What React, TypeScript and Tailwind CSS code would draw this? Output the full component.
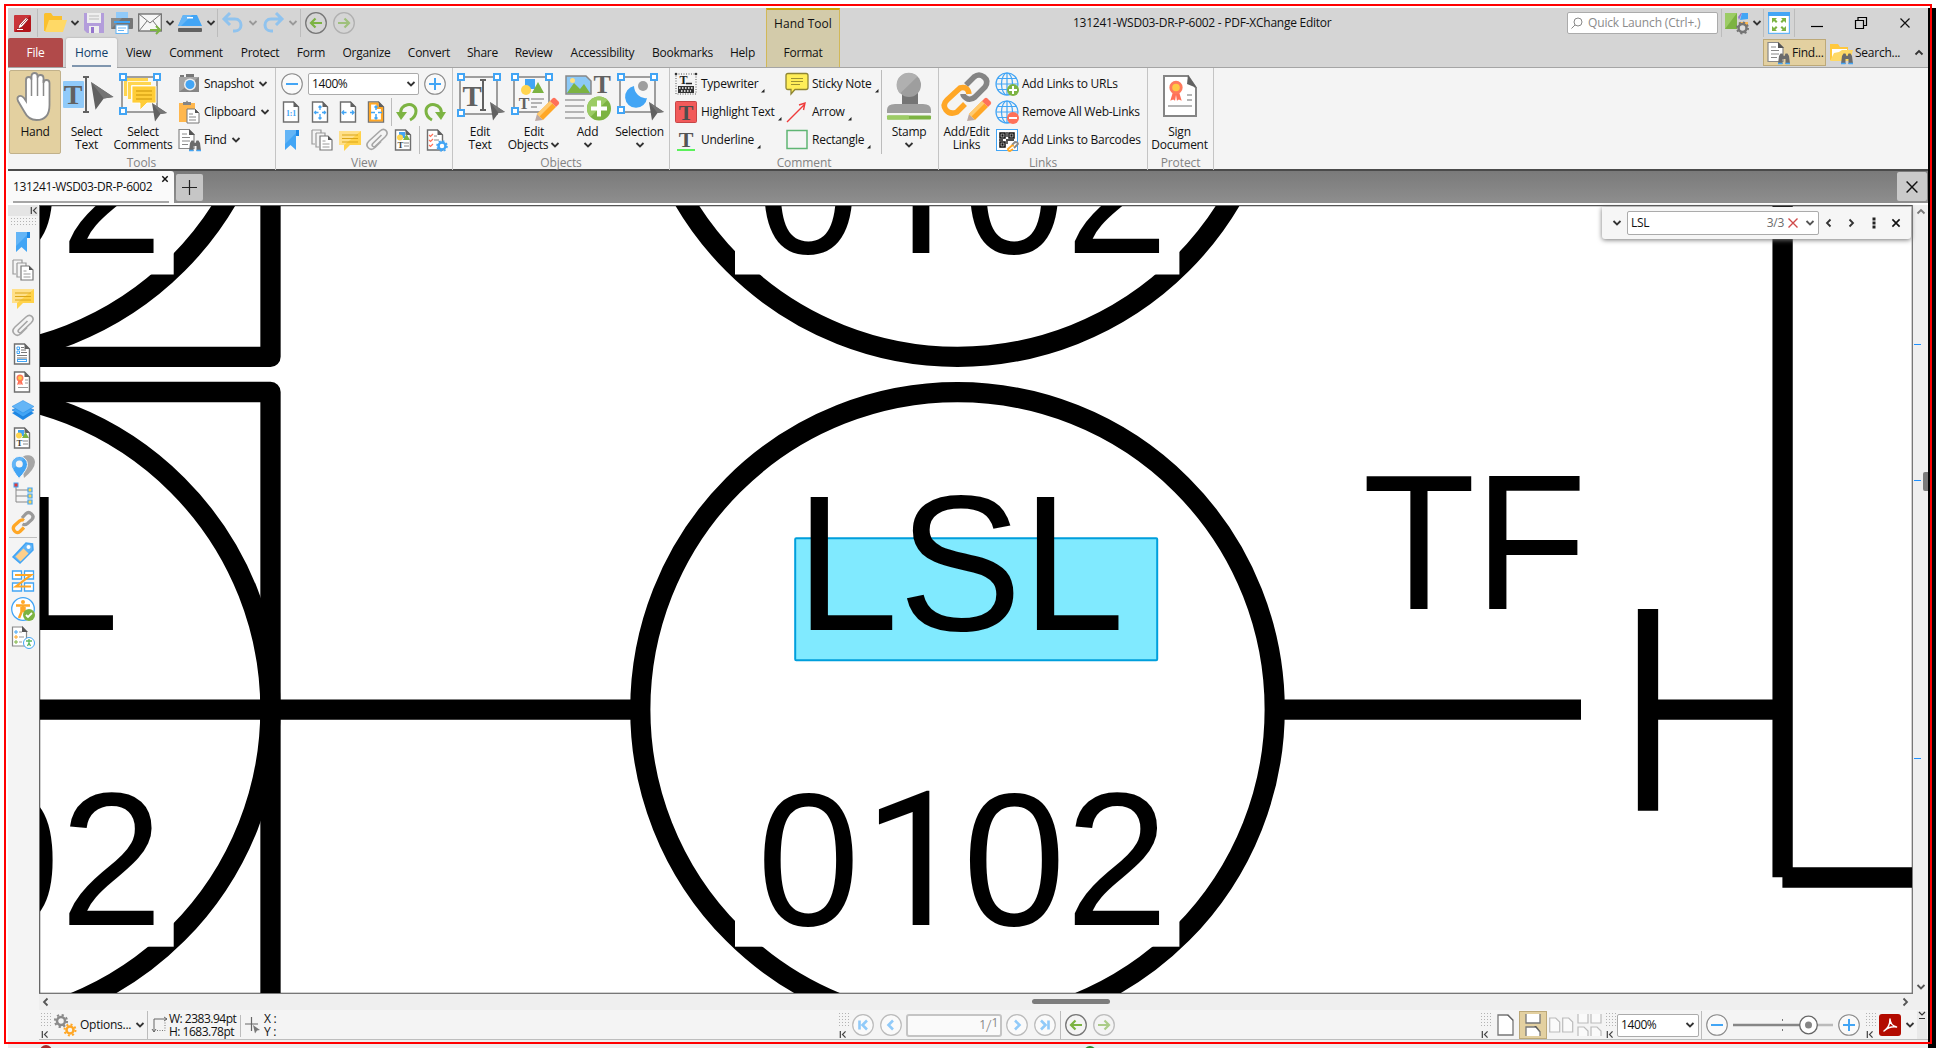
import React from "react";

type P = { children?: React.ReactNode; className?: string };

const Ic = ({ s = 24, w, h, vb, className = "", children }: P & { s?: number; w?: number; h?: number; vb?: string }) => (
  <svg
    width={w ?? s}
    height={h ?? s}
    viewBox={vb ?? `0 0 ${w ?? s} ${h ?? s}`}
    fill="none"
    className={`shrink-0 overflow-visible ${className}`}
  >
    {children}
  </svg>
);

/* ---------- small shared glyphs ---------- */
const Chev = ({ c = "#333", d = "down", className = "" }: { c?: string; d?: "down" | "up" | "left" | "right"; className?: string }) => {
  const paths = { down: "M1.5 3 5 6.5 8.5 3", up: "M1.5 6.5 5 3 8.5 6.5", left: "M6.5 1.5 3 5 6.5 8.5", right: "M3.5 1.5 7 5 3.5 8.5" };
  return (
    <Ic s={10} className={className}>
      <path d={paths[d]} stroke={c} strokeWidth="1.8" />
    </Ic>
  );
};
const Cross = ({ s = 10, c = "#111", sw = 1.2 }: { s?: number; c?: string; sw?: number }) => (
  <Ic s={s} vb="0 0 10 10">
    <path d="M.5.5 9.5 9.5M9.5.5.5 9.5" stroke={c} strokeWidth={sw} />
  </Ic>
);
const Circle = ({ children, c = "#8a8a8a" }: P & { c?: string }) => (
  <Ic s={22}>
    <circle cx="11" cy="11" r="10.3" fill="#fafafa" stroke={c} strokeWidth="1.1" />
    {children}
  </Ic>
);
const Minus = () => (
  <Circle>
    <path d="M5 11h12" stroke="#42a5f5" strokeWidth="2" />
  </Circle>
);
const Plus = () => (
  <Circle>
    <path d="M5 11h12M11 5v12" stroke="#42a5f5" strokeWidth="2" />
  </Circle>
);
const NavArrow = ({ right, dim }: { right?: boolean; dim?: boolean }) => (
  <Ic s={22} className={dim ? "opacity-60" : ""}>
    <circle cx="11" cy="11" r="10.3" stroke={dim ? "#999" : "#777"} strokeWidth="1.3" />
    <path d={right ? "M5 11h11M11.500 6.500 16 11l-4.500 4.500" : "M17 11H6M10.500 6.500 6 11l4.500 4.500"} stroke="#7cb342" strokeWidth="2.2" />
  </Ic>
);
const Handles = ({ pts }: { pts: number[][] }) => (
  <>
    {pts.map(([x, y]) => (
      <rect key={`${x}-${y}`} x={x - 3} y={y - 3} width="6" height="6" fill="#fff" stroke="#42a5f5" strokeWidth="2" />
    ))}
  </>
);
const Cursor = ({ x, y, s = 1 }: { x: number; y: number; s?: number }) => (
  <g transform={`translate(${x} ${y}) scale(${s})`}>
    <path d="M0 0 15 10 8.500 11 3 18.500Z" fill="#616161" />
    <path d="M0 0 15 10 8.500 11Z" fill="#757575" />
  </g>
);
const Sheet = ({ children, stroke = "#6f6f6f" }: P & { stroke?: string }) => (
  <>
    <path d="M3.500 2h10l5 5v15h-15z" fill="#fff" stroke={stroke} strokeWidth="1.400" />
    <path d="M13.500 1.500v5.500h5.500z" fill="#616161" />
    {children}
  </>
);
const Pencil = ({ x, y, s = 1 }: { x: number; y: number; s?: number }) => (
  <g transform={`translate(${x} ${y}) scale(${s})`}>
    <path d="M0 24 2 17 8 23Z" fill="#bcaaa4" />
    <path d="M2 17 15 4 21 10 8 23Z" fill="#ffa726" />
    <path d="M2 17 15 4 17.500 6.500 4.500 19.500Z" fill="#ffca6e" />
    <path d="M15 4 17.500 1.500Q19 0 20.500 1.500L23.500 4.500Q25 6 23.500 7.500L21 10Z" fill="#ff7058" />
  </g>
);
const Serif = ({ x, y, size, fill = "#616161" }: { x: number; y: number; size: number; fill?: string }) => (
  <text x={x} y={y} fontSize={size} fill={fill} textAnchor="middle" fontFamily="'Liberation Serif', serif" fontWeight="bold">
    T
  </text>
);
const Binos = ({ x = 0, y = 0 }: { x?: number; y?: number }) => (
  <g transform={`translate(${x} ${y})`}>
    <path d="M1 3 2.500.500h2L5.500 3h1L7.500.500h2L11 3l1 8H7.500V6h-3v5H0z" fill="#6b6b6b" />
    <path d="M0 10.500h4.500M7.500 10.500H12" stroke="#42a5f5" strokeWidth="1.500" />
  </g>
);
const Folder = () => (
  <>
    <path d="M1 20V3.500Q1 2 2.500 2H8l2 3h9v4L5 20z" fill="#fbc02d" />
    <path d="M2 21 6 9H24L20 21z" fill="#ffd966" />
  </>
);
const FindIcon = () => (
  <Ic>
    <path d="M2 1.500h10l5 5V20.500H2z" fill="#fff" stroke="#888" strokeWidth="1.200" />
    <path d="M12 1v6h6z" fill="#555" />
    <path d="M5 6h5M5 9.500h8M5 13h8M5 16.500h6" stroke="#888" />
    <Binos x={12} y={12} />
  </Ic>
);
const SearchIcon = () => (
  <Ic>
    <path d="M1 19V3h8l2 3h8v13z" fill="#ffc83d" />
    <path d="M3 8h15v11H3z" fill="#fff" />
    <path d="M1 20 5 12l5-1 3-2h11l-3 11z" fill="#ffd966" />
    <Binos x={12} y={12} />
  </Ic>
);
const BookmarkIcon = () => (
  <Ic>
    <path d="M5 2h14l-3 2v18l-5.500-5L5 22z" fill="#42a5f5" />
    <path d="M5 2h11v3L5 16z" fill="#64b5f6" />
    <path d="M16 2h3v6h-3z" fill="#1e88e5" />
  </Ic>
);
const PagesIcon = () => (
  <Ic>
    <path d="M2 2h9v3M2 2v14h3M6 5h9v3M6 5v14h3" stroke="#999" strokeWidth="1.200" />
    <path d="M10 8h8l4 4v10H10z" fill="#fff" stroke="#777" strokeWidth="1.200" />
    <path d="M18 8v4h4z" fill="#555" />
    <path d="M12.500 13h3M12.500 16h7M12.500 19h7" stroke="#999" />
  </Ic>
);
const CommentIcon = () => (
  <Ic>
    <path d="M1 3h22v14H12l-6 6v-6H1z" fill="#ffd24a" />
    <path d="M1 3h22L6 17H1z" fill="#ffe08a" />
    <path d="M4 7h16M4 10.500h16M4 14h16" stroke="#dba617" strokeWidth="1.200" />
  </Ic>
);
const ClipIcon = () => (
  <Ic>
    <path
      d="m16.500 7-8.700 8.500c-1.800 2 .700 4.500 2.700 2.500L20 9c5-5-.500-10-5-6L4 13c-5 5 1 11 6 6.500l6-6"
      stroke="#a6a6a6"
      strokeWidth="1.600"
    />
  </Ic>
);
const ContentIcon = () => (
  <Ic>
    <Sheet>
      <rect x="7" y="4" width="6" height="6" fill="#42a5f5" />
      <path d="M11 12 14.500 6 18 12z" fill="#7cb342" />
      <circle cx="8" cy="9.500" r="3" fill="#ffd54f" />
      <Serif x={8.500} y={20} size={9} fill="#444" />
      <path d="M12 15h5M12 18h5" stroke="#888" />
    </Sheet>
  </Ic>
);
const Seal = ({ x, y, s = 1 }: { x: number; y: number; s?: number }) => (
  <g transform={`translate(${x} ${y}) scale(${s})`}>
    <path d="M-3 4-6 14l3-1.500L-1 14 0 8l1 6 2-1.500 3 1.500L3 4z" fill="#ff7058" />
    <circle r="5.500" fill="#ffc845" stroke="#ff7a5c" strokeWidth="3" />
  </g>
);
const Chain = () => (
  <Ic>
    <path d="m11 8 4-4.300q2.500-2.500 5.500.200t.500 5.500L16.500 13.500q-2.500 2-5 .500" stroke="#9a9a9a" strokeWidth="3.200" />
    <path d="M13 10.500q-2-1.500-4.500.500L3.500 15.500q-2.500 2.500 0 5.500t5.500.500L13 17.500" stroke="#ffa726" strokeWidth="3.200" />
  </Ic>
);
const Globe = ({ children }: P) => (
  <Ic>
    <g stroke="#42a5f5" strokeWidth="1.200">
      <circle cx="12" cy="12" r="11" />
      <ellipse cx="12" cy="12" rx="5.500" ry="11" />
      <path d="M1 12h22M12 1v22M3 6.500h18M3 17.500h18" />
    </g>
    {children}
  </Ic>
);

/* ---------- ribbon building blocks ---------- */
const Group = ({ label, w, children }: P & { label: string; w: string }) => (
  <div className={`flex h-[102px] shrink-0 flex-col border-r border-[#c4c4c4] pt-[2px] ${w}`}>
    <div className="flex h-[84px]">{children}</div>
    <div className="pt-px text-center leading-4 tracking-[-0.1px] text-[#838383]">{label}</div>
  </div>
);
const Big = ({ w, icon, a, b, chev, active }: { w: string; icon: React.ReactNode; a: string; b?: string; chev?: boolean; active?: boolean }) => (
  <div
    className={`flex h-[84px] shrink-0 flex-col items-center whitespace-nowrap ${w} ${
      active ? "rounded-[2px] border border-[#c1b18a] bg-[#e3d0a0] pt-[1px]" : "pt-[2px]"
    }`}
  >
    <div className="flex h-[53px] items-start justify-center">{icon}</div>
    <div className="h-[13px] leading-[13px]">{a}</div>
    <div className="flex h-[13px] items-center gap-[2px] leading-[13px]">
      {b}
      {chev && <Chev />}
    </div>
  </div>
);
const Row = ({ icon, t, chev, tri }: { icon: React.ReactNode; t: string; chev?: boolean; tri?: boolean }) => (
  <div className="flex h-7 items-center gap-[3px] whitespace-nowrap">
    {icon}
    <span>{t}</span>
    {chev && <Chev className="ml-px" />}
    {tri && (
      <Ic s={4} className="mt-[13px]">
        <path d="M3.500 0v3.500H0z" fill="#222" />
      </Ic>
    )}
  </div>
);
const Sep = ({ className = "" }: P) => <div className={`w-px shrink-0 bg-[#bcbcbc] ${className}`} />;
const Cell = ({ className = "", children }: P) => <div className={`flex shrink-0 items-center justify-center ${className}`}>{children}</div>;

/* ---------- title bar ---------- */
const TitleBar = () => (
  <div className="flex h-[30px] items-center">
    <Cell className="w-[29px] pr-px">
      <Ic s={17}>
        <rect width="17" height="17" rx="1.500" fill="#b3151b" />
        <path d="M0 17V1.500Q0 0 1.500 0H17z" fill="#c9353a" />
        <path d="m4 14 1-4 7-7.500 2.500 2L8 12zM7 10l6-6" fill="#fff" stroke="#8e1216" strokeWidth=".7" />
        <path d="M3 14.500h6" stroke="#fff" />
      </Ic>
    </Cell>
    <Sep className="h-7" />
    <Cell className="w-[30px] pl-1"><Ic><Folder /></Ic></Cell>
    <Cell className="w-[13px]"><Chev /></Cell>
    <Cell className="w-[26px]">
      <Ic s={22}>
        <path d="M1 1h20v20H4l-3-3z" fill="#b39ddb" />
        <rect x="4" y="1" width="14" height="10" fill="#eee" />
        <path d="M6 4h10M6 7h10" stroke="#bbb" />
        <rect x="6" y="14" width="10" height="7" fill="#eee" />
        <rect x="8" y="15" width="3" height="6" fill="#9575cd" />
      </Ic>
    </Cell>
    <Cell className="w-[29px]">
      <Ic s={22}>
        <rect x="5" y="0" width="12" height="7" fill="#90caf9" />
        <rect x="0" y="6" width="22" height="11" rx="1" fill="#757575" />
        <path d="M0 6h11L0 17z" fill="#8b8b8b" />
        <rect x="3" y="9" width="16" height="2" fill="#42a5f5" />
        <rect x="5" y="13" width="12" height="8.500" fill="#fff" stroke="#64b5f6" />
        <path d="M7 16h8M7 18.500h6" stroke="#64b5f6" />
      </Ic>
    </Cell>
    <Cell className="w-[28px]">
      <Ic>
        <rect x=".7" y="3" width="22.600" height="17" fill="#f7f7f7" stroke="#757575" strokeWidth="1.400" />
        <path d="m1 3 11 9L23 3M1 20l8-10M23 20l-8-10" stroke="#757575" />
        <path d="M12 19h10M18 15l4 4-4 4" stroke="#7cb342" strokeWidth="2" />
      </Ic>
    </Cell>
    <Cell className="w-[11px]"><Chev /></Cell>
    <Cell className="w-[29px]">
      <Ic>
        <path d="M5 4h14l5 11H0z" fill="#42a5f5" />
        <path d="M5 4h9L3 15H0z" fill="#64b5f6" />
        <rect x="9" y="6" width="6" height="1.500" fill="#fff" />
        <rect x="0" y="17" width="24" height="4" rx="1" fill="#616161" />
      </Ic>
    </Cell>
    <Cell className="w-[13px]"><Chev /></Cell>
    <Sep className="h-7" />
    <Cell className="w-[29px]">
      <Ic s={22}>
        <path d="M2 7h11c8 0 8 12 0 12h-2M8 1 2 7l6 6" stroke="#90c3ee" strokeWidth="3" />
      </Ic>
    </Cell>
    <Cell className="w-[12px]"><Chev c="#999" /></Cell>
    <Cell className="w-[28px]">
      <Ic s={22}>
        <path d="M20 7H9C1 7 1 19 9 19h2M14 1l6 6-6 6" stroke="#90c3ee" strokeWidth="3" />
      </Ic>
    </Cell>
    <Cell className="w-[12px]"><Chev c="#999" /></Cell>
    <Sep className="ml-px h-7" />
    <Cell className="w-[30px]"><NavArrow /></Cell>
    <Cell className="w-[26px]"><NavArrow right dim /></Cell>
    <div className="ml-[409px] flex h-[30px] w-[74px] shrink-0 items-center justify-center border-x border-t-2 border-[#d1b858] border-t-[#cda408] bg-[#d3cbaa] tracking-[0.05px]">
      Hand Tool
    </div>
    <div className="ml-[233px] w-[300px] shrink-0 whitespace-nowrap">131241-WSD03-DR-P-6002 - PDF-XChange Editor</div>
    <div className="ml-[194px] flex h-[22px] w-[151px] shrink-0 items-center gap-[5px] rounded-[2px] border border-[#ababab] bg-white pl-[3px] text-[#8b8b8b]">
      <Ic s={12}>
        <circle cx="7" cy="5" r="4" stroke="#888" />
        <path d="M4 8 .5 11.500" stroke="#888" />
      </Ic>
      <span className="whitespace-nowrap tracking-[-0.15px]">Quick Launch (Ctrl+.)</span>
    </div>
    <Sep className="ml-[3px] h-[28px]" />
    <Cell className="w-[29px]">
      <Ic>
        <rect x="0" y="2" width="12" height="16" fill="#9ccc65" />
        <path d="M0 18 12 2v16z" fill="#7cb342" />
        <path d="m14 9 3-7h-1l-3 4z" fill="#9575cd" />
        <path d="M17 2h6v6l-8 1z" fill="#42a5f5" />
        <path d="M14 11h9v5h-9z" fill="#ffb74d" />
        <circle cx="17.500" cy="17" r="4" fill="#ddd" stroke="#757575" strokeWidth="2.500" />
        <circle cx="17.500" cy="17" r="5.500" stroke="#757575" strokeWidth="2" strokeDasharray="2 2.300" />
      </Ic>
    </Cell>
    <Cell className="w-[11px]"><Chev /></Cell>
    <Sep className="ml-[1px] h-[28px]" />
    <Cell className="w-[30px]">
      <Ic s={22}>
        <rect x=".6" y=".6" width="20.800" height="20.800" fill="#fff" stroke="#64b5f6" strokeWidth="1.200" />
        <rect width="22" height="4" fill="#42a5f5" />
        <g fill="#7cb342">
          <path d="M4 6h5L7.500 7.500l2 2-1.500 1.500-2-2L4 11zM18 6h-5l1.500 1.500-2 2L14 11l2-2 2 2zM4 19h5l-1.500-1.500 2-2L8 14l-2 2-2-2zM18 19h-5l1.500-1.500-2-2L14 14l2 2 2-2z" />
        </g>
      </Ic>
    </Cell>
    <Sep className="h-[28px]" />
    <Cell className="w-[44px]">
      <Ic s={12}><path d="M0 9.500h12" stroke="#000" strokeWidth="1.200" /></Ic>
    </Cell>
    <Cell className="w-[44px]">
      <Ic s={12}>
        <path d="M.5 3.500h8v8h-8zM3 3.500v-3h8.500v8H8.500" stroke="#000" strokeWidth="1.200" />
      </Ic>
    </Cell>
    <Cell className="w-[44px]"><Cross /></Cell>
  </div>
);

const tabs: [string, string][] = [
  ["View", "w-[43px]"], ["Comment", "w-[72px]"], ["Protect", "w-[56px]"], ["Form", "w-[46px]"], ["Organize", "w-[65px]"],
  ["Convert", "w-[60px]"], ["Share", "w-[47px]"], ["Review", "w-[55px]"], ["Accessibility", "w-[83px]"], ["Bookmarks", "w-[77px]"], ["Help", "w-[43px]"],
];

const TabRow = () => (
  <div className="flex h-[30px] border-b border-[#a5a5a5]">
    <Cell className="w-[55px] rounded-t-[2px] bg-[#b14a4a] text-white">File</Cell>
    <div className="ml-[3px] flex h-[30px] w-[51px] flex-col items-center rounded-t-[2px] bg-[#f4f4f4] pt-[7px] text-[#123f6b] shadow-[0_0_2px_#999]">
      <span className="leading-4">Home</span>
      <div className="mt-[4px] h-[2px] w-[39px] bg-[#8096ae]" />
    </div>
    {tabs.map(([t, w]) => (
      <Cell key={t} className={`${w} whitespace-nowrap`}>{t}</Cell>
    ))}
    <Cell className="ml-[2px] w-[74px] border-x border-[#d1b858] bg-[#d3cbaa]">Format</Cell>
    <div className="grow" />
    <div className="mt-[1px] flex h-[27px] w-[63px] items-center gap-[2px] border border-[#bda978] bg-[#e3d0a0] pl-[2px] whitespace-nowrap">
      <FindIcon />
      Find...
    </div>
    <div className="flex w-[84px] items-center gap-[2px] pl-[3px] whitespace-nowrap">
      <SearchIcon />
      Search...
    </div>
    <Cell className="w-[18px]"><Chev d="up" /></Cell>
  </div>
);

/* ---------- ribbon ---------- */
const HandIcon = () => (
  <Ic w={38} h={50}>
    <path
      d="M10 29V8c0-4 5.500-4 5.500 0V4c0-4 6-4 6 0v2c0-4 6-4 6 0v5c0-4 6-4 6 0v22c0 10-5 15-13 15-7 0-10-4-12-8L2 29c-2-5 3-7 6-3z"
      fill="#fff"
      stroke="#8a8a8a"
      strokeWidth="1.800"
    />
    <path d="M15.500 8v16M21.500 6v18M27.500 8v16" stroke="#8a8a8a" strokeWidth="1.500" />
  </Ic>
);
const SelectTextIcon = () => (
  <Ic w={50} h={50}>
    <rect x="1" y="9" width="21" height="27" rx="1" fill="#90caf9" />
    <Serif x={11} y={32} size={28} />
    <path d="M21 5h6M21 40h6M24 5v35" stroke="#616161" strokeWidth="2" />
    <Cursor x={29} y={10} s={1.500} />
  </Ic>
);
const SelectCommentsIcon = () => (
  <Ic w={48} h={50}>
    <path d="M3 5h35v35H3z" fill="#f7f7f7" stroke="#9e9e9e" strokeWidth="2" />
    <path d="M5 6h24v4H9v14H5z" fill="#ffd54f" />
    <path d="M8.500 9.500h24v4h-20v14h-4z" fill="#ffd54f" stroke="#fff" strokeWidth=".8" />
    <path d="M13 14h24v17h-9l-7 7v-7h-8z" fill="#ffcd38" stroke="#fff" strokeWidth=".8" />
    <path d="M17 19h16M17 23h16M17 27h16" stroke="#dba617" strokeWidth="1.500" />
    <Handles pts={[[4, 5], [38, 5], [4, 39]]} />
    <Cursor x={33} y={31} />
  </Ic>
);
const EditTextIcon = () => (
  <Ic w={48} h={50}>
    <path d="M4 5h37v37H4z" fill="#f7f7f7" stroke="#9e9e9e" strokeWidth="2" />
    <Serif x={16} y={34} size={29} />
    <path d="M24 8h6M24 38h6M27 8v30" stroke="#616161" strokeWidth="2" />
    <Handles pts={[[5, 5], [41, 5], [5, 41]]} />
    <Cursor x={34} y={30} />
  </Ic>
);
const EditObjectsIcon = () => (
  <Ic w={48} h={50}>
    <path d="M4 5h35v35H4z" fill="#f7f7f7" stroke="#9e9e9e" strokeWidth="2" />
    <rect x="15" y="7" width="10" height="10" fill="#42a5f5" />
    <path d="M22 21 28 10l6 11z" fill="#7cb342" />
    <circle cx="16" cy="18" r="5" fill="#ffd54f" />
    <Serif x={14} y={37} size={16} />
    <path d="M21 27h13M21 31h11M21 35h6" stroke="#9e9e9e" strokeWidth="1.500" />
    <Handles pts={[[5, 5], [39, 5], [5, 39]]} />
    <Pencil x={25} y={25} />
  </Ic>
);
const AddIcon = () => (
  <Ic w={46} h={50}>
    <path d="M1 4h20l5 5v13H1z" fill="#8cc9f7" stroke="#888" strokeWidth="1.500" />
    <path d="M2 21 9 11l6 6 4-5 6 9z" fill="#7cb342" />
    <circle cx="7.500" cy="8.500" r="2.500" fill="#ffe082" />
    <Serif x={37} y={21} size={26} />
    <path d="M0 28h20M0 34h19M0 40h19M0 46h20" stroke="#9e9e9e" strokeWidth="1.600" />
    <circle cx="34" cy="36.500" r="12" fill="#7cb342" />
    <path d="M25.500 45a12 12 0 0 1 17-17z" fill="#9ccc65" />
    <path d="M26 36.500h16M34 28.500v16" stroke="#fff" strokeWidth="4" />
  </Ic>
);
const SelectionIcon = () => (
  <Ic w={48} h={50}>
    <path d="M4 5h35v35H4z" fill="#f7f7f7" stroke="#9e9e9e" strokeWidth="2" />
    <circle cx="27" cy="14" r="5" fill="#9e9e9e" />
    <path d="M18 14a11 11 0 1 0 13 12q-5 1-9-3t-4-9z" fill="#42a5f5" />
    <Handles pts={[[5, 5], [38, 5], [5, 38]]} />
    <Cursor x={33} y={30} />
  </Ic>
);
const StampIcon = () => (
  <Ic w={46} h={50}>
    <rect x="16" y="20" width="16" height="13" fill="#757575" />
    <circle cx="23" cy="13" r="12" fill="#9e9e9e" />
    <path d="M14 21.500a12 12 0 0 1 17.500-17z" fill="#b0b0b0" />
    <path d="M1 41v-3q0-6 8-6h28q8 0 8 6v3z" fill="#9e9e9e" />
    <rect x="1" y="43.500" width="44" height="4" rx="1" fill="#7cb342" />
    <rect x="1" y="43.500" width="22" height="4" rx="1" fill="#9ccc65" />
  </Ic>
);
const LinksIcon = () => (
  <Ic w={50} h={50}>
    <path d="m24 13 8-8q5-4 10 0t1 10L33 25q-5 4-9 1-3-2-3-4" stroke="#858585" strokeWidth="5.500" />
    <path d="M27 22q-1-8-9-6L5 28q-5 5-1 10t11 2l8-8" stroke="#ffa726" strokeWidth="5.500" />
    <Pencil x={25} y={25} />
  </Ic>
);
const SignIcon = () => (
  <Ic w={36} h={50}>
    <path d="M2 4h24l8 12v28H2z" fill="#fff" stroke="#858585" strokeWidth="2" />
    <path d="m26 3 9 13-10-4z" fill="#616161" />
    <Seal x={14} y={15.500} s={0.950} />
    <path d="M25 23h5M25 28h5M6 34h24" stroke="#9e9e9e" strokeWidth="1.500" />
  </Ic>
);

const PageBtn = ({ children, stroke }: P & { stroke?: string }) => (
  <Ic><Sheet stroke={stroke}>{children}</Sheet></Ic>
);

const Ribbon = () => (
  <div className="flex h-[103px] border-b-2 border-[#4a4a4a] bg-[#f4f4f4]">
    <Group label="Tools" w="w-[268px]">
      <Big w="ml-[1px] w-[52px]" icon={<HandIcon />} a="Hand" active />
      <Big w="w-[51px]" icon={<SelectTextIcon />} a="Select" b="Text" />
      <Big w="w-[62px]" icon={<SelectCommentsIcon />} a="Select" b="Comments" />
      <div className="ml-[3px] tracking-[-0.32px]">
        <Row t="Snapshot" chev icon={
          <Ic>
            <path d="M2 5h20v15H2z" fill="#858585" /><path d="M2 5h20L2 20z" fill="#a5a5a5" />
            <path d="M3 3h4v2H3zM9 2h8v3H9z" fill="#777" />
            <circle cx="13" cy="12.500" r="6" fill="#eee" /><circle cx="13" cy="12.500" r="4.500" fill="#42a5f5" />
          </Ic>} />
        <Row t="Clipboard" chev icon={
          <Ic>
            <rect x="2" y="3" width="16" height="19" fill="#ffb74d" />
            <path d="M6 4V2h3q1-3 2 0h3v3H6z" fill="#858585" />
            <path d="M10 9h8l4 4v10H10z" fill="#fff" stroke="#777" /><path d="M18 9v4h4z" fill="#555" />
            <path d="M12 14h4M12 17h7M12 20h7" stroke="#888" />
          </Ic>} />
        <Row t="Find" chev icon={<FindIcon />} />
      </div>
    </Group>
    <Group label="View" w="w-[177px]">
      <div>
        <div className="flex h-7 items-center pl-[5px]">
          <Minus />
          <div className="mx-[5px] flex h-[22px] w-[111px] items-center justify-between rounded-[2px] border border-[#ababab] bg-white pr-[2px] pl-[3px] tracking-[-0.4px]">
            1400%<Chev />
          </div>
          <Plus />
        </div>
        <div className="flex h-7 items-center">
          <Cell className="w-[31px]">
            <PageBtn><text x="11" y="16" fontSize="8" textAnchor="middle" fill="#42a5f5" fontFamily="'Liberation Serif',serif" fontWeight="bold">1:1</text></PageBtn>
          </Cell>
          <Cell className="w-[28px]">
            <PageBtn><path d="M11 6v4M11 14v5M5.500 12.500h4M13 12.500h4M9.500 7.500 11 6l1.500 1.500M9.500 17.500 11 19l1.500-1.500M7 11l-1.500 1.500L7 14M15 11l1.500 1.500L15 14" stroke="#42a5f5" strokeWidth="1.300" /></PageBtn>
          </Cell>
          <Cell className="w-[28px]">
            <PageBtn><path d="M5.500 12.500h4M13 12.500h4M7 10.500l-2 2 2 2M15 10.500l2 2-2 2" stroke="#42a5f5" strokeWidth="1.300" /></PageBtn>
          </Cell>
          <Cell className="w-[28px]">
            <PageBtn><path d="M5 3.500v17h12V8h-4.500V3.500z" stroke="#ffa726" strokeWidth="2.200" /><path d="M11 6v4M11 14v5M6 12.500h4M13 12.500h4M9.500 7.500 11 6l1.500 1.500M9.500 17.500 11 19l1.500-1.500" stroke="#42a5f5" strokeWidth="1.500" /></PageBtn>
          </Cell>
          <Sep className="h-7" />
          <Cell className="w-[29px]">
            <Ic><path d="M6 15C3 3 21 1 21 11q0 6-6 9" stroke="#7cb342" strokeWidth="3" /><path d="M1 12h11l-6 8z" fill="#7cb342" /></Ic>
          </Cell>
          <Cell className="w-[28px]">
            <Ic><path d="M18 15C21 3 3 1 3 11q0 6 6 9" stroke="#7cb342" strokeWidth="3" /><path d="M23 12H12l6 8z" fill="#7cb342" /></Ic>
          </Cell>
        </div>
        <div className="flex h-7 items-center">
          <Cell className="w-[32px]"><BookmarkIcon /></Cell>
          <Cell className="w-[28px]"><PagesIcon /></Cell>
          <Cell className="w-[27px]"><CommentIcon /></Cell>
          <Cell className="w-[27px]"><ClipIcon /></Cell>
          <Cell className="w-[28px]"><ContentIcon /></Cell>
          <Sep className="ml-[1px] h-7" />
          <Cell className="w-[31px]">
            <PageBtn>
              <path d="m5 7 1.500 1.500L9 6M5 12l1.500 1.500L9 11M5 17l1.500 1.500L9 16" stroke="#ff7058" strokeWidth="1.200" />
              <path d="M10 8h3M10 12h5" stroke="#888" />
              <circle cx="18" cy="18" r="3.500" fill="#fff" stroke="#42a5f5" strokeWidth="2.500" />
              <circle cx="18" cy="18" r="5" stroke="#42a5f5" strokeWidth="1.600" strokeDasharray="2 1.900" />
            </PageBtn>
          </Cell>
        </div>
      </div>
    </Group>
    <Group label="Objects" w="w-[217px]">
      <Big w="w-[54px]" icon={<EditTextIcon />} a="Edit" b="Text" />
      <Big w="w-[54px]" icon={<EditObjectsIcon />} a="Edit" b="Objects" chev />
      <Big w="w-[53px]" icon={<AddIcon />} a="Add" chev />
      <Big w="w-[51px]" icon={<SelectionIcon />} a="Selection" chev />
    </Group>
    <Group label="Comment" w="w-[269px]">
      <div className="ml-[4px] w-[111px]">
        <Row t="Typewriter" tri icon={
          <Ic>
            <rect x="2" y="2" width="20" height="20" stroke="#555" strokeDasharray="1 1.500" />
            <circle cx="2" cy="2" r="1.300" fill="#333" /><circle cx="22" cy="2" r="1.300" fill="#333" />
            <Serif x={9.500} y={12} size={12} fill="#222" />
            <path d="M12 11.500h6" stroke="#222" strokeWidth="1.500" />
            <path d="M4 14h16v7H4z" fill="#333" /><path d="M5 16h14M7 19h10" stroke="#fff" strokeDasharray="1.500 1.500" strokeWidth="1.500" />
          </Ic>} />
        <Row t="Highlight Text" tri icon={
          <Ic><rect x="1.500" y="1.500" width="21" height="21" rx="1" fill="#f25a5a" stroke="#c74646" /><Serif x={12} y={20} size={22} fill="#4d4d4d" /></Ic>} />
        <Row t="Underline" tri icon={
          <Ic><Serif x={12} y={19} size={22} fill="#555" /><path d="M3 22h18" stroke="#29f029" strokeWidth="1.500" /></Ic>} />
      </div>
      <div className="w-[96px]">
        <Row t="Sticky Note" tri icon={
          <Ic>
            <path d="M3 1.500h18q2 0 2 2v12q0 2-2 2H10l-4 4.500v-4.500H3q-2 0-2-2v-12q0-2 2-2z" fill="#ffee58" stroke="#8f8531" strokeWidth="1.300" />
            <path d="M6 6.500h12M6 9.500h12M6 12.500h9" stroke="#9c9233" />
          </Ic>} />
        <Row t="Arrow" tri icon={<Ic><path d="M2 22 20 4M14 5l6-2-1.500 7" stroke="#ef3b3b" strokeWidth="1.400" /></Ic>} />
        <Row t="Rectangle" tri icon={<Ic><rect x="2" y="2.500" width="20" height="18" stroke="#5fb573" strokeWidth="1.500" /></Ic>} />
      </div>
      <Sep className="h-[84px]" />
      <Big w="w-[54px]" icon={<StampIcon />} a="Stamp" chev />
    </Group>
    <Group label="Links" w="w-[209px]">
      <Big w="w-[55px]" icon={<LinksIcon />} a="Add/Edit" b="Links" />
      <div className="ml-px">
        <Row t="Add Links to URLs" icon={<Globe><circle cx="18" cy="18" r="6" fill="#7cb342" /><path d="M14 18h8M18 14v8" stroke="#fff" strokeWidth="2" /></Globe>} />
        <Row t="Remove All Web-Links" icon={<Globe><circle cx="18" cy="18" r="6" fill="#ff7058" /><path d="M14 18h8" stroke="#fff" strokeWidth="2" /></Globe>} />
        <Row t="Add Links to Barcodes" icon={
          <Ic>
            <rect x="1.500" y="1.500" width="21" height="21" fill="#fff" stroke="#42a5f5" />
            <path d="M5 5h5v5H5zM14 5h5v5h-5zM5 14h5v5H5z" stroke="#111" strokeWidth="1.500" />
            <path d="M7 7h1v1H7zM16 7h1v1h-1zM7 16h1v1H7zM12 4v5M11 12h8M12 13v3M4 12h4" stroke="#111" strokeWidth="1.300" />
            <path d="m17 17 3-3q3 0 3 2l-4 4" stroke="#888" strokeWidth="1.800" />
            <path d="m19 18-2-.5-4 3.500q0 2 2 2l3-2" stroke="#ffa726" strokeWidth="1.800" />
          </Ic>} />
      </div>
    </Group>
    <Group label="Protect" w="w-[66px]">
      <Big w="w-[63px]" icon={<SignIcon />} a="Sign" b="Document" />
    </Group>
  </div>
);

/* ---------- document tabs ---------- */
const DocTabs = () => (
  <div className="flex h-[34px] border-b-2 border-white bg-[#868686] bg-[linear-gradient(#7a7a7a,#8e8e8e)]">
    <div className="relative flex w-[166px] shrink-0 items-center rounded-tr-[3px] bg-[#fafafa] pl-[5px] tracking-[-0.38px] whitespace-nowrap">
      131241-WSD03-DR-P-6002
      <div className="absolute top-[5px] right-[6px] flex"><Cross s={6} sw={2.4} /></div>
      <div className="absolute bottom-0 left-[5px] h-[2px] w-[156px] bg-[#a6a6a6]" />
    </div>
    <Cell className="mt-[3px] ml-[2px] h-[27px] w-[27px] rounded-[2px] bg-[#c6c6c6]">
      <Ic s={15}><path d="M0 7.500h15M7.500 0v15" stroke="#222" strokeWidth="1.200" /></Ic>
    </Cell>
    <div className="grow" />
    <Cell className="mr-px mt-px h-[29px] w-[30px] rounded-[2px] bg-[#cacaca]"><Cross s={12} /></Cell>
  </div>
);

/* ---------- side panel ---------- */
const Grip = ({ w, h }: { w: number; h: number }) => (
  <Ic w={w} h={h}>
    {Array.from({ length: Math.floor(h / 3) }, (_, i) => (
      <path key={i} d={`M0 ${i * 3 + 0.5}h${w}`} stroke="#b3b3b3" strokeDasharray="1 2" />
    ))}
  </Ic>
);
const Collapse = ({ s = 8 }: { s?: number }) => (
  <Ic s={s} vb="0 0 8 8">
    <path d="M1.500 0v8M7.500.500 4 4l3.500 3.500" stroke="#444" strokeWidth="1.400" />
  </Ic>
);

const sideIcons: React.ReactNode[] = [
  <BookmarkIcon />,
  <PagesIcon />,
  <CommentIcon />,
  <ClipIcon />,
  <PageBtn>
    <path d="M6 5h2.500v2.500H6zM6 9h2.500v2.500H6z" stroke="#42a5f5" />
    <path d="M10 5.500h3M10 8h5M10 10.500h6M6 13.500h10M6 16h10" stroke="#777" />
    <rect x="6.500" y="17.500" width="9" height="2" stroke="#42a5f5" />
  </PageBtn>,
  <PageBtn>
    <Seal x={9} y={8} s={0.5} />
    <path d="M14 10h3M14 13h3M7 17.500h10" stroke="#999" />
  </PageBtn>,
  <Ic>
    <path d="m1 15 11-5 11 5-11 7z" fill="#1e88e5" /><path d="m1 12 11-5 11 5-11 7z" fill="#42a5f5" stroke="#1976d2" strokeWidth=".6" />
    <path d="m1 8.500 11-6 11 6-11 6.500z" fill="#64b5f6" stroke="#1e88e5" strokeWidth=".5" />
  </Ic>,
  <ContentIcon />,
  <Ic>
    <path d="M13 24Q24 15 24 8a7.500 7.500 0 0 0-14-3z" fill="#a6a6a6" />
    <path d="M8 24.500Q.5 15.500.5 10.500a8 8 0 0 1 16 0Q16.500 15.500 8 24.500z" fill="#42a5f5" stroke="#f4f4f4" />
    <path d="M2 15Q1 12 1 10.500A7.500 7.500 0 0 1 13 5z" fill="#64b5f6" />
    <circle cx="8.300" cy="10" r="3.500" fill="#f4f4f4" />
  </Ic>,
  <Ic>
    <path d="M5 4v16h12M5 8h12M5 14h12" stroke="#888" />
    <rect x="3" y="1" width="4" height="4" fill="#e53935" stroke="#42a5f5" />
    <path d="M17 6h4v4h-4zM17 12h4v4h-4zM17 18h4v4h-4z" fill="#ffd54f" stroke="#42a5f5" strokeWidth="1.200" />
  </Ic>,
  <Chain />,
];
const sideIcons2: React.ReactNode[] = [
  <Ic>
    <path d="M2 16 15 2l6.500 1L22 9 9 22z" fill="#64b5f6" stroke="#42a5f5" strokeWidth="1.500" />
    <path d="m4.500 15.500 8-8 5 5-8 8z" fill="#ffd08a" /><circle cx="17.500" cy="6" r="2" fill="#fff" />
  </Ic>,
  <Ic>
    <path d="M1.500 2h9v8h-9zM13.500 2h9v8h-9zM1.500 14h9v8h-9zM13.500 14h9v8h-9z" fill="#fff" stroke="#42a5f5" strokeWidth="1.300" />
    <path d="M4 6h16L5 17.500h15" stroke="#ffa726" strokeWidth="2.200" />
  </Ic>,
  <Ic>
    <circle cx="12" cy="12" r="11.300" fill="#fff" stroke="#42a5f5" strokeWidth="1.300" />
    <circle cx="12" cy="5" r="2" fill="#ffa726" />
    <path d="M5 8.500h14M12 9v6M10.500 10v5L8 21M13.500 10v4l1 3" stroke="#ffa726" strokeWidth="2.500" />
    <circle cx="18" cy="18" r="6" fill="#7cb342" /><path d="m15 18 2 2 4-4" stroke="#fff" strokeWidth="1.800" />
  </Ic>,
  <Ic>
    <path d="M1.500 2h10l4 5v14h-14z" fill="#fff" stroke="#888" strokeWidth="1.200" /><path d="M11 1v6h6z" fill="#555" />
    <path d="M4 6h2v2H4z" stroke="#42a5f5" /><path d="M4 11h2v2H4z" stroke="#ffa726" /><path d="M4 16h2v2H4z" stroke="#7cb342" />
    <path d="M8 7h3M8 12h5M8 17h3" stroke="#999" />
    <circle cx="18" cy="18" r="5.500" fill="#fff" stroke="#42a5f5" /><path d="M15 16h6M18 14v4M16.500 21l1.500-3 1.500 3" stroke="#5cb860" strokeWidth="1.300" />
  </Ic>,
];

const SidePanel = () => (
  <div className="flex w-[31px] shrink-0 flex-col items-center bg-[#f4f4f4] pr-px">
    <div className="flex h-[11px] w-full items-center justify-end bg-[#e5e5e5] pr-[1px]"><Collapse s={7} /></div>
    <div className="mt-[2px] h-[10px]"><Grip w={25} h={9} /></div>
    {sideIcons.map((n, i) => <Cell key={i} className="h-[28px]">{n}</Cell>)}
    <div className="my-[1px] h-px w-[28px] bg-[#c0c0c0]" />
    {sideIcons2.map((n, i) => <Cell key={i} className="h-[28px]">{n}</Cell>)}
  </div>
);

/* ---------- drawing ---------- */
const DText = ({ x, y, t, sy = 1.043, font = "'Liberation Sans', sans-serif" }: { x: number; y: number; t: string; sy?: number; font?: string }) => (
  <text transform={`translate(${x} ${y}) scale(1 ${sy})`} fontSize="185" fontFamily={font} fill="#000" letterSpacing="0" style={{ fontKerning: "none" }}>
    {t}
  </text>
);
const Instrument = ({ cx, cy, tx, ty }: { cx: number; cy: number; tx: number; ty: number }) => (
  <g>
    <circle cx={cx} cy={cy} r="317.200" stroke="#000" strokeWidth="20.200" fill="none" />
    <rect x={tx - 22} y={ty - 140} width="444.400" height={162} fill="#fff" />
    <DText x={tx} y={ty} t="0" sy={1.025} />
    <DText x={tx + 106.5} y={ty} t="1" sy={1.012} font="Roboto, sans-serif" />
    <DText x={tx + 205.7} y={ty} t="02" sy={1.025} />
  </g>
);
const Drawing = () => (
  <svg width="1874" height="789" viewBox="39 205 1874 789" className="block shrink-0 bg-white">
    <Instrument cx={957.5} cy={39.6} tx={757} ty={252.5} />
    <Instrument cx={-46.8} cy={39.6} tx={-248.7} ty={252.5} />
    <Instrument cx={957.5} cy={709.4} tx={757} ty={924.700} />
    <Instrument cx={-46.8} cy={709.4} tx={-248.7} ty={924.700} />
    <rect x="795.2" y="538.2" width="362" height="122" rx="1" fill="#80eaff" stroke="#009fdc" strokeWidth="2" />
    <DText x={795.6} y={629.5} t="LSL" />
    <DText x={-210.1} y={629.5} t="LSL" />
    <DText x={1362.500} y={609} t="T" />
    <DText x={1474} y={609} t="F" />
    <g stroke="#000" strokeWidth="20.300" fill="none">
      <path d="M0 356.800H270.500V180M0 392H270.500V1000" strokeLinejoin="round" />
      <path d="M0 709.600H640M1275 709.600H1581M1648 609V810.700M1648 709.600H1782M1782.600 200V877.300M1782.400 877.500H1920" />
    </g>
    <path d="M39 205.500H1913" stroke="#555" />
    <path d="M39.500 205V994" stroke="#666" />
    <path d="M1912.500 205V994M39 993.500H1913" stroke="#777" />
    <path d="M40 206.500H1912M40.500 206V993M1911.500 206V993M40 992.500H1912" stroke="#000" strokeOpacity=".18" />
  </svg>
);

const FindBar = () => (
  <div className="absolute top-[2px] left-[1563px] flex h-[32px] w-[309px] items-center rounded-b-[3px] bg-[#f6f6f6] shadow-[0_1px_5px_#777]">
    <Cell className="w-[25px] pl-1"><Chev /></Cell>
    <div className="flex h-[24px] w-[192px] items-center rounded-[2px] border border-[#ababab] bg-white pl-[3px]">
      LSL
      <span className="ml-auto text-[#6b6b6b]">3/3</span>
      <Cell className="w-[17px]"><Cross c="#d04a4a" sw={1.4} /></Cell>
      <Cell className="w-[17px]"><Chev c="#555" /></Cell>
    </div>
    <Cell className="w-[20px]"><Chev d="left" /></Cell>
    <Cell className="w-[23px]"><Chev d="right" /></Cell>
    <Cell className="w-[24px]">
      <Ic w={4} h={12}><path d="M.5.500h3v3h-3zM.5 4.500h3v3h-3zM.5 8.500h3v3h-3z" fill="#222" /></Ic>
    </Cell>
    <Cell className="w-[19px]"><Cross s={8} sw={2} /></Cell>
  </div>
);

const VScroll = () => (
  <div className="relative flex w-[15px] flex-col items-center justify-between bg-[#efefef] pt-[2px] pb-[2px]">
    <Chev d="up" c="#777" />
    <Chev c="#555" />
    <div className="absolute top-[139px] left-[1px] h-px w-[7px] bg-[#1e90ff]" />
    <div className="absolute top-[275px] left-[1px] h-px w-[7px] bg-[#1e90ff]" />
    <div className="absolute top-[553px] left-[1px] h-px w-[7px] bg-[#1e90ff]" />
    <div className="absolute top-[267px] right-0 h-[19px] w-[5px] rounded-l-[2px] bg-[#7b7b7b]" />
  </div>
);

/* ---------- status bar ---------- */
const StatusGrip = () => (
  <div className="flex w-[10px] shrink-0 flex-col items-start gap-[3px]">
    <Grip w={10} h={15} />
    <Collapse s={7} />
  </div>
);
const PagerBtn = ({ d }: { d: string }) => (
  <Ic s={22}>
    <circle cx="11" cy="11" r="10.300" fill="#fafafa" stroke="#bbb" strokeWidth="1.200" />
    <path d={d} stroke="#90caf9" strokeWidth="2.600" />
  </Ic>
);

const StatusBar = () => (
  <div className="flex h-[30px] items-center border-b border-[#bdbdbd] bg-[#f4f4f4] pt-[2px]">
    <div className="ml-[2px]" /><StatusGrip />
    <Ic w={24} className="ml-[2px]">
      <circle cx="8" cy="8" r="4" stroke="#8a8a8a" strokeWidth="2.500" /><circle cx="8" cy="8" r="6" stroke="#8a8a8a" strokeWidth="2.200" strokeDasharray="2.200 2.500" />
      <circle cx="17" cy="17" r="3.500" stroke="#ffa726" strokeWidth="2.500" /><circle cx="17" cy="17" r="5.500" stroke="#ffa726" strokeWidth="2" strokeDasharray="2 2.300" />
    </Ic>
    <span className="ml-[3px] w-[55px]">Options...</span>
    <Chev />
    <Sep className="ml-[2px] h-7" />
    <Ic w={16} h={16} vb="0 0 16 16" className="ml-[4px]">
      <path d="M2 15V2h13M12 0l3 2-3 2M0 12l2 3 2-3" stroke="#666" /><path d="M5 13.500h8V5" stroke="#777" strokeDasharray="1 1.500" />
    </Ic>
    <div className="ml-[1px] w-[71px] leading-[13px] tracking-[-0.5px] whitespace-nowrap">
      <div>W: 2383.94pt</div>
      <div>H: 1683.78pt</div>
    </div>
    <Sep className="mt-[1px] h-[22px]" />
    <Ic w={16} h={20} className="ml-[4px]">
      <path d="M0 9h13M6.500 2v14" stroke="#666" strokeWidth="1.200" /><path d="m8 10 7 5-3 .5-2 3z" fill="#777" />
    </Ic>
    <div className="ml-[3px] leading-[13px]"><div>X :</div><div>Y :</div></div>
    <div className="grow" />
    <div className="flex w-[276px] shrink-0 items-center">
      <StatusGrip />
      <div className="ml-[3px]" /><PagerBtn d="M7.500 6.500v9M15 6.500 10.500 11l4.500 4.500" />
      <div className="ml-[6px]" /><PagerBtn d="M13 6.500 8.500 11l4.500 4.500" />
      <div className="mx-[4px] flex h-[23px] w-[96px] items-center justify-end rounded-[3px] border-2 border-[#c4c4c4] bg-[#fafafa] pr-[2px] text-[#888]">
        1<span className="text-[17px] font-light">/</span><span className="-mt-[5px]">1</span>
      </div>
      <PagerBtn d="M9 6.500 13.500 11 9 15.500" />
      <div className="ml-[6px]" /><PagerBtn d="M14.500 6.500v9M7 6.500 11.500 11 7 15.500" />
      <Sep className="mx-[4px] h-7" />
      <NavArrow />
      <div className="ml-[6px]" /><NavArrow right dim />
    </div>
    <div className="w-[366px]" />
    <div className="flex w-[447px] shrink-0 items-center">
      <StatusGrip />
      <Ic w={18} h={22} className="ml-[6px]"><path d="M1 1h10l5 5v15H1z" fill="#fff" stroke="#777" strokeWidth="1.300" /><path d="M10 1h1l5 5v1z" fill="#555" /></Ic>
      <Cell className="ml-[4px] h-[28px] w-[28px] border border-[#bda978] bg-[#e3d0a0]">
        <Ic w={16} h={22}><path d="M1 0v9h14V0M1 22V13h10l4 5v4" fill="#fff" stroke="#777" strokeWidth="1.300" /><path d="M9 12h2l5 6z" fill="#555" /></Ic>
      </Cell>
      <Ic w={26} h={22} className="ml-[2px]"><path d="M.7 4h6l4 4v10h-10zM13.700 4h6l4 4v10h-10z" fill="#fafafa" stroke="#bbb" strokeWidth="1.200" /></Ic>
      <Ic w={26} h={22} className="ml-[2px]"><path d="M1 0v9h10V0M14 0v9h10V0M1 22v-9h6l4 4v5M14 22v-9h6l4 4v5" fill="#fafafa" stroke="#bbb" strokeWidth="1.200" /></Ic>
      <div className="ml-[3px]" /><StatusGrip />
      <div className="ml-px flex h-[23px] w-[82px] items-center justify-between rounded-[2px] border border-[#ababab] bg-white pr-[3px] pl-[3px] tracking-[-0.4px]">1400%<Chev /></div>
      <Sep className="mr-[4px] ml-[2px] h-7" />
      <Minus />
      <Ic w={102} h={22} className="ml-[5px]">
        <path d="M0 11h75" stroke="#868686" strokeWidth="2.500" /><path d="M75 11h25" stroke="#bbb" strokeWidth="2.500" />
        <path d="M49.500 5v2M49.500 15v2" stroke="#777" /><circle cx="75.500" cy="11" r="8.800" fill="#fff" stroke="#666" strokeWidth="1.300" /><circle cx="75.500" cy="11" r="3.500" fill="#868686" />
      </Ic>
      <div className="ml-[3px]" /><Plus />
      <div className="ml-[6px]" /><StatusGrip />
      <Ic s={22} className="ml-[3px]">
        <rect width="22" height="22" rx="3" fill="#b30b00" />
        <path d="M5 17q6-4 6-12 0 6 6.500 8-7-1-12.500 4z" stroke="#fff" strokeWidth="1.500" strokeLinejoin="round" />
      </Ic>
      <Chev className="ml-[4px]" />
      <Cell className="ml-[2px] h-[28px] w-[10px] items-start bg-[#e9e9e9]">
        <Ic s={8}><path d="M1 1l3 3 3-3M1 7.500h6" stroke="#333" strokeWidth="1.200" /></Ic>
      </Cell>
    </div>
  </div>
);

export default function App() {
  return (
    <div className="relative h-[1048px] w-[1936px] overflow-hidden bg-white pt-[8px] pl-[8px] font-['Open_Sans','Noto_Sans',sans-serif] text-[12px] tracking-[-0.25px] text-[#111]">
      <div className="flex h-[1040px]">
        <div className="flex w-[1920px] flex-col">
          <div className="bg-[#d5d5d5]">
            <TitleBar />
            <TabRow />
          </div>
          <Ribbon />
          <DocTabs />
          <div className="flex h-[836px]">
            <SidePanel />
            <div className="flex w-[1889px] flex-col">
              <div className="relative flex h-[789px]">
                <Drawing />
                <VScroll />
                <FindBar />
              </div>
              <div className="flex h-[16px] shrink-0 items-center bg-[#efefef] pl-[2px]">
                <Chev d="left" c="#555" />
                <div className="ml-[981px] h-[5px] w-[78px] rounded-full bg-[#7b7b7b]" />
                <div className="ml-[790px]"><Chev d="right" c="#555" /></div>
              </div>
              <StatusBar />
            </div>
          </div>
          <div className="relative h-[8px] overflow-hidden bg-[#eee]">
            <div className="absolute top-[5px] left-[32px] size-[12px] rounded-full bg-[#a82a2a]" />
            <div className="absolute top-[6px] left-[1076px] size-[12px] rounded-full bg-[#2a8a2a]" />
          </div>
        </div>
        <div className="w-[8px] bg-black" />
      </div>
      <div className="pointer-events-none absolute top-[4px] left-[4px] h-[1040px] w-[1928px] border-2 border-[#f00]" />
    </div>
  );
}
